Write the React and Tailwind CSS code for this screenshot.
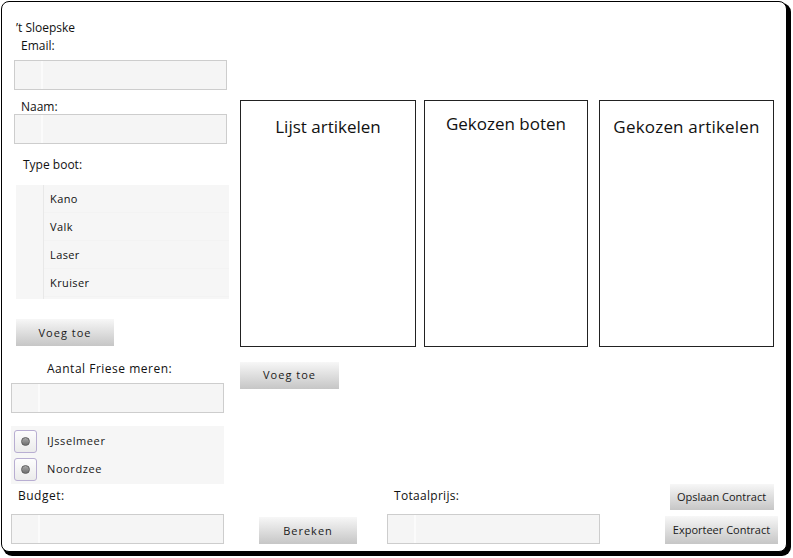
import React from "react";

const font = { fontFamily: '"Open Sans", "Noto Sans", sans-serif' };

function Field({ className = "" }) {
  return (
    <div className={`flex h-[30px] border border-[#cdcdcd] bg-[#f5f5f5] ${className}`}>
      <div className="w-[28px] border-r-2 border-[#fbfbfb]" />
    </div>
  );
}

function GrayButton({ children, className = "" }) {
  return (
    <button
      className={`flex items-center justify-center bg-gradient-to-b from-[#f7f7f7] to-[#c6c6c6] text-[11px] text-[#1a1a1a] ${className}`}
    >
      {children}
    </button>
  );
}

function Radio({ label }) {
  return (
    <div className="flex h-[28px] items-center">
      <div className="ml-[3px] flex h-[23px] w-[23px] items-center justify-center rounded-[3px] border border-[#b8aed2] bg-gradient-to-b from-[#fdfdfd] to-[#ebebeb]">
        <div className="h-[9px] w-[9px] rounded-full border border-[#5e5e5e] bg-gradient-to-b from-[#a9a9a9] to-[#6f6f6f]" />
      </div>
      <span className="ml-[10px] text-[11px] tracking-[0.6px] text-[#1a1a1a]">{label}</span>
    </div>
  );
}

function Panel({ title, className = "", titleClass = "" }) {
  return (
    <div className={`h-[247px] border border-[#222] bg-white ${className}`}>
      <div className={`text-center leading-5 text-[#111] ${titleClass}`}>{title}</div>
    </div>
  );
}

export default function App() {
  const boats = ["Kano", "Valk", "Laser", "Kruiser"];

  return (
    <div className="h-[558px] w-[793px] bg-white" style={font}>
      <div className="ml-[1px] pt-[1px]">
        <div className="h-[551px] w-[786px] rounded-[8px] border border-black bg-white shadow-[3px_3px_0_1px_#000]">
          <div className="flex">
            {/* left column */}
            <div className="flex w-[230px] flex-col pl-[9px] pt-[19px] text-[12px] leading-[14px] text-[#111]">
              <div className="ml-[5px]">’t Sloepske</div>
              <div className="ml-[10px] mt-[4px]">Email:</div>
              <Field className="ml-[3px] mt-[7px] w-[213px]" />
              <div className="ml-[10px] mt-[10px]">Naam:</div>
              <Field className="ml-[3px] w-[213px]" />
              <div className="ml-[12px] mt-[14px]">Type boot:</div>
              <div className="ml-[5px] mt-[13px] flex h-[114px] w-[213px] bg-[#f6f6f6]">
                <div className="w-[28px] border-r border-[#e8e8e8]" />
                <div className="flex-1">
                  {boats.map((b) => (
                    <div
                      key={b}
                      className="flex h-[28px] items-center border-b border-[#f3f3f3] pl-[6px] text-[11px] tracking-[0.4px]"
                    >
                      {b}
                    </div>
                  ))}
                </div>
              </div>
              <GrayButton className="ml-[5px] mt-[20px] h-[27px] w-[98px] tracking-[1px]">Voeg toe</GrayButton>
              <div className="ml-[36px] mt-[16px] tracking-[0.5px]">Aantal Friese meren:</div>
              <Field className="mt-[7px] h-[29px] w-[213px]" />
              <div className="mt-[13px] h-[58px] w-[213px] bg-[#f6f6f6] pt-[1px]">
                <Radio label="IJsselmeer" />
                <Radio label="Noordzee" />
              </div>
            </div>

            {/* right area */}
            <div className="ml-[8px] pt-[98px]">
              <div className="flex">
                <Panel title="Lijst artikelen" className="w-[176px] pt-[16px]" titleClass="text-[17px]" />
                <Panel title="Gekozen boten" className="ml-[8px] w-[164px] pt-[13px]" titleClass="text-[17px]" />
                <Panel title="Gekozen artikelen" className="ml-[11px] w-[175px] pt-[16px]" titleClass="text-[17px] tracking-[0.2px]" />
              </div>
              <GrayButton className="mt-[15px] h-[27px] w-[99px] tracking-[1px]">Voeg toe</GrayButton>
            </div>
          </div>

          {/* bottom row */}
          <div className="flex items-end pl-[9px] text-[12px] leading-[14px] text-[#111]">
            <div className="flex flex-col">
              <div className="ml-[7px] mt-[4px] tracking-[0.5px]">Budget:</div>
              <Field className="mt-[11px] w-[213px]" />
            </div>
            <GrayButton className="ml-[35px] h-[27px] w-[98px] tracking-[1px]">Bereken</GrayButton>
            <div className="ml-[30px] flex flex-col">
              <div className="ml-[7px] tracking-[0.3px]">Totaalprijs:</div>
              <Field className="mt-[11px] w-[213px]" />
            </div>
            <div className="ml-[65px] flex w-[113px] flex-col items-center">
              <GrayButton className="h-[26px] w-[104px]">Opslaan Contract</GrayButton>
              <GrayButton className="mt-[6px] h-[28px] w-[113px]">Exporteer Contract</GrayButton>
            </div>
          </div>
        </div>
      </div>
    </div>
  );
}
